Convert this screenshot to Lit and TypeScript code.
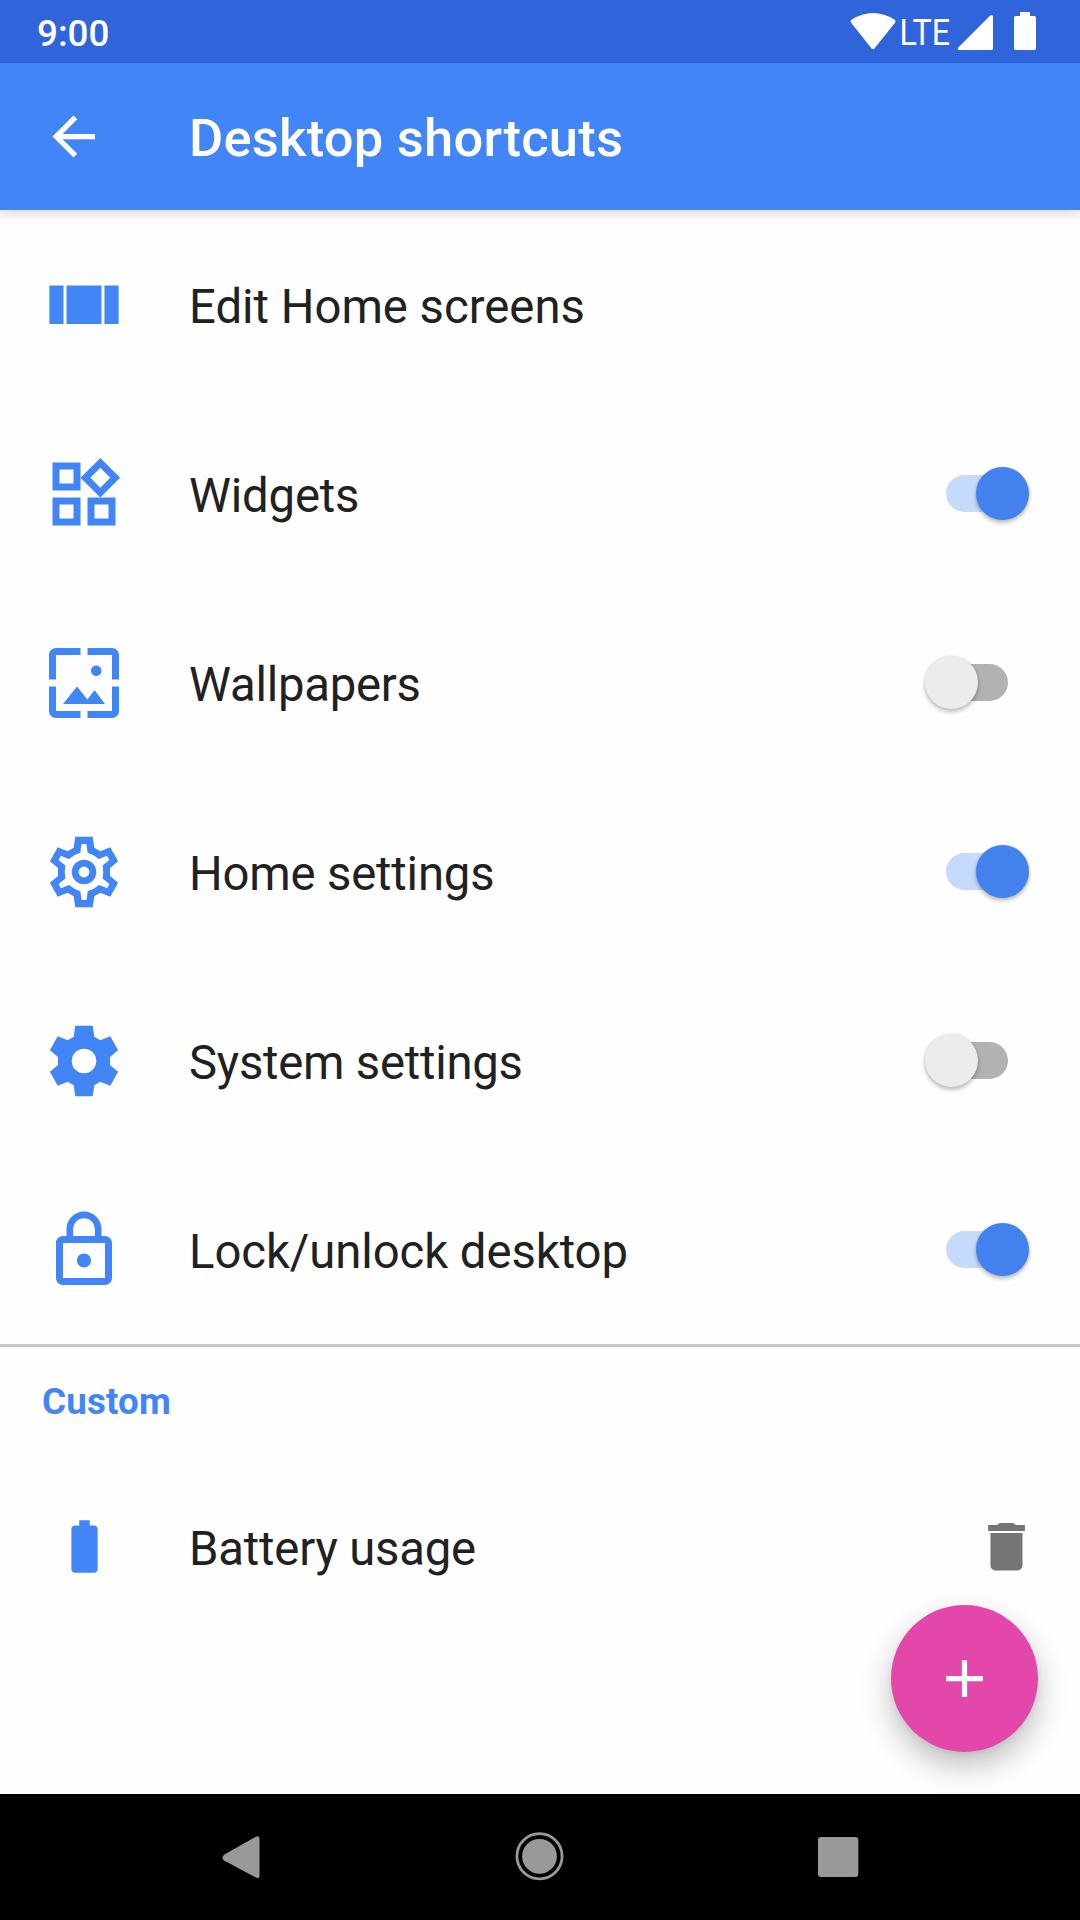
import { LitElement, html, css, svg, nothing } from "lit";
import { customElement, property, state } from "lit/decorators.js";
import { classMap } from "lit/directives/class-map.js";
import { styleMap } from "lit/directives/style-map.js";

// Outer silhouette shared by the outlined and the filled gear.
const GEAR =
  "M14.5 1.95L14.95 5.05L16.65 6.05L19.5 4.9L21.75 8.95L19.43 10.85V13.15L21.75 15.05L19.5 19.1L16.65 17.95L14.95 18.95L14.5 22.05H9.5L9.05 18.95L7.35 17.95L4.5 19.1L2.25 15.05L4.57 13.15V10.85L2.25 8.95L4.5 4.9L7.35 6.05L9.05 5.05L9.5 1.95Z";

const ICONS: Record<string, unknown> = {
  back: svg`<path d="M20.2 11H7.83l5.59-5.59L12 4l-8 8 8 8 1.41-1.41L7.83 13H20.2z"/>`,
  screens: svg`<path d="M2.1 6.4h4.05v11.05H2.1zM7 6.4h10v11.05H7zM17.85 6.4h4.05v11.05h-4.05z"/>`,
  widgets: svg`<path d="M16.66 4.52l2.83 2.83-2.83 2.83-2.83-2.83 2.83-2.83M9 5v4H5V5h4m10 10v4h-4v-4h4M9 15v4H5v-4h4m7.66-13.31L11 7.34 16.66 13l5.66-5.66-5.66-5.65zM11 3H3v8h8V3zm10 10h-8v8h8v-8zm-10 0H3v8h8v-8z"/>`,
  wallpapers: svg`<path d="M4 4h7V2H4c-1.1 0-2 .9-2 2v7h2V4zm6 9l-4 5h12l-3-4-2.03 2.71L10 13zm7-4.5c0-.83-.67-1.5-1.5-1.5S14 7.67 14 8.5s.67 1.5 1.5 1.5S17 9.33 17 8.5zM20 2h-7v2h7v7h2V4c0-1.1-.9-2-2-2zm0 18h-7v2h7c1.1 0 2-.9 2-2v-7h-2v7zM4 13H2v7c0 1.1.9 2 2 2h7v-2H4v-7z"/>`,
  gearOutline: svg`<path fill-rule="evenodd" d="${GEAR}M17.45 11.27c.04.31.05.52.05.73 0 .21-.02.43-.05.73l-.14 1.13.89.7 1.08.84-.7 1.21-1.27-.51-1.04-.42-.9.68c-.43.32-.84.56-1.25.73l-1.06.43-.16 1.13-.2 1.35h-1.4l-.19-1.35-.16-1.13-1.06-.43c-.43-.18-.83-.41-1.23-.71l-.91-.7-1.06.43-1.27.51-.7-1.21 1.08-.84.89-.7-.14-1.13c-.03-.31-.05-.54-.05-.74s.02-.43.05-.73l.14-1.13-.89-.7-1.08-.84.7-1.21 1.27.51 1.04.42.9-.68c.43-.32.84-.56 1.25-.73l1.06-.43.16-1.13.2-1.35h1.39l.19 1.35.16 1.13 1.06.43c.43.18.83.41 1.23.71l.91.7 1.06-.43 1.27-.51.7 1.21-1.07.85-.89.7.14 1.13z"/><circle cx="12" cy="12" r="2.53" fill="none" stroke="currentColor" stroke-width="1.95"/>`,
  gear: svg`<path fill-rule="evenodd" d="${GEAR}M12 8.5a3.5 3.5 0 1 0 0 7a3.5 3.5 0 1 0 0-7z"/>`,
  lock: svg`<path d="M18 8h-1V6c0-2.76-2.24-5-5-5S7 3.24 7 6v2H6c-1.1 0-2 .9-2 2v10c0 1.1.9 2 2 2h12c1.1 0 2-.9 2-2V10c0-1.1-.9-2-2-2zM8.9 6c0-1.71 1.39-3.1 3.1-3.1s3.1 1.39 3.1 3.1v2H8.9V6zM18 20H6V10h12v10zm-6-3c1.1 0 2-.9 2-2s-.9-2-2-2-2 .9-2 2 .9 2 2 2z"/>`,
  battery: svg`<path d="M15.67 4H14V2h-4v2H8.33C7.6 4 7 4.6 7 5.33v15.33C7 21.4 7.6 22 8.33 22h7.33c.74 0 1.34-.6 1.34-1.33V5.33C17 4.6 16.4 4 15.67 4z"/>`,
  trash: svg`<path d="M5.9 6.9h12.2V19.1c0 1.1-.9 2-2 2H7.9c-1.1 0-2-.9-2-2zM5 3.8h3.5l.5-.5q.3-.3.8-.3h4.4q.5 0 .8.3l.5.5H19v2.25H5z"/>`,
  add: svg`<path d="M19 13h-6v6h-2v-6H5v-2h6V5h2v6h6z"/>`,
};

@customElement("ui-icon")
class UiIcon extends LitElement {
  static styles = css`
    :host { display: block; flex: none; }
    .glyph { display: block; width: 100%; height: 100%; fill: currentColor; }
  `;
  @property() name = "";
  render() {
    return html`<svg class="glyph" viewBox="0 0 24 24">${ICONS[this.name]}</svg>`;
  }
}

@customElement("ui-switch")
class UiSwitch extends LitElement {
  static styles = css`
    :host { display: block; flex: none; }
    .switch { display: grid; align-items: center; width: 104px; height: 53px; cursor: pointer; }
    .track, .thumb { grid-area: 1 / 1; }
    .track { justify-self: center; width: 62px; height: 37px; border-radius: 19px; background: #b2b2b2; }
    .thumb {
      justify-self: start; width: 53px; height: 53px; border-radius: 50%; background: #ececec;
      box-shadow: 0 3px 4px rgba(0, 0, 0, 0.24), 0 0 3px rgba(0, 0, 0, 0.12);
    }
    .on .track { background: #c6dafc; }
    .on .thumb { justify-self: end; background: #4382ee; }
  `;
  @property({ type: Boolean }) on = false;
  render() {
    return html`<div
      class=${classMap({ switch: true, on: this.on })}
      role="switch"
      aria-checked=${this.on ? "true" : "false"}
      @click=${() => (this.on = !this.on)}
    ><div class="track"></div><div class="thumb"></div></div>`;
  }
}

interface Shortcut {
  icon: string;
  label: string;
  tracking: number;
  on?: boolean;
}

@customElement("app-root")
class AppRoot extends LitElement {
  static styles = css`
    :host {
      display: flex; flex-direction: column; position: relative;
      width: 1080px; height: 1920px; overflow: hidden;
      background: #fefefe; color: #212121;
      font-family: Roboto, "Noto Sans", sans-serif;
    }
    .status {
      box-sizing: border-box; flex: none; display: flex; justify-content: space-between;
      height: 63px; padding-left: 37px; background: #2f64db; color: #fff;
    }
    .clock { font-size: 36.75px; font-weight: 500; line-height: 68px; }
    .indicators { display: block; width: 240px; height: 63px; fill: #fff; }
    .lte { font-family: Roboto, sans-serif; font-size: 37.5px; font-weight: 400; }
    .appbar {
      box-sizing: border-box; flex: none; display: flex; align-items: center; gap: 84px;
      height: 147px; padding: 0 42px; background: #4285f6; color: #fff;
      box-shadow: 0 4px 11px rgba(0, 0, 0, 0.15);
      clip-path: inset(0 0 -24px 0);
    }
    .small { width: 63px; height: 63px; }
    .title { font-size: 52.5px; font-weight: 500; line-height: 62px; padding-top: 3px; letter-spacing: 0.22px; }
    .list { flex: 1; display: flex; flex-direction: column; }
    .row { box-sizing: border-box; flex: none; display: flex; align-items: center; height: 189px; padding: 0 42px; }
    .lead { display: flex; justify-content: center; width: 84px; margin-right: 63px; color: #4285f6; }
    .large { width: 84px; height: 84px; }
    .label { flex: 1; font-size: 47.25px; line-height: 56px; padding-top: 5px; }
    .toggle { margin-right: 9px; }
    .trash { color: #757575; }
    .divider { flex: none; height: 3px; background: #cacaca; }
    .section {
      box-sizing: border-box; flex: none; height: 105px; padding: 0 42px;
      font-size: 36.75px; font-weight: 700; line-height: 109px; color: #4285f6; letter-spacing: 0.15px;
    }
    .fab {
      position: absolute; right: 42px; bottom: 168px; width: 147px; height: 147px;
      display: flex; align-items: center; justify-content: center;
      border-radius: 50%; background: #e347aa; color: #fff;
      box-shadow: 0 14px 30px rgba(0, 0, 0, 0.25), 0 2px 6px rgba(0, 0, 0, 0.06);
    }
    .nav { position: relative; flex: none; height: 126px; background: #000; }
    .navicons { display: block; width: 1080px; height: 126px; fill: #999; }
  `;

  @state() private shortcuts: Shortcut[] = [
    { icon: "screens", label: "Edit Home screens", tracking: 0 },
    { icon: "widgets", label: "Widgets", tracking: -0.17, on: true },
    { icon: "wallpapers", label: "Wallpapers", tracking: -0.24, on: false },
    { icon: "gearOutline", label: "Home settings", tracking: -0.18, on: true },
    { icon: "gear", label: "System settings", tracking: -0.24, on: false },
    { icon: "lock", label: "Lock/unlock desktop", tracking: -0.06, on: true },
  ];

  private label(text: string, tracking: number) {
    return html`<div class="label" style=${styleMap({ letterSpacing: `${tracking}px` })}>${text}</div>`;
  }

  private row(s: Shortcut) {
    return html`<div class="row">
      <div class="lead"><ui-icon class="large" name=${s.icon}></ui-icon></div>
      ${this.label(s.label, s.tracking)}
      ${s.on === undefined ? nothing : html`<ui-switch class="toggle" ?on=${s.on}></ui-switch>`}
    </div>`;
  }

  render() {
    return html`
      <div class="status">
        <div class="clock">9:00</div>
        <svg class="indicators" viewBox="840 0 240 63">
          <path d="M851.3 19.8Q873 6.3 894.8 19.8Q896 20.8 895.2 22.4L874.6 48.2Q873 50 871.4 48.2L850.9 22.4Q850 20.8 851.3 19.8Z"/>
          <text class="lte" x="899.5" y="44.7" textLength="50.5" lengthAdjust="spacingAndGlyphs">LTE</text>
          <path d="M990 15.7Q993 13.6 993 17V48.5Q993 50 991.5 50H959.5Q956.6 50 958.6 47.2Z"/>
          <path d="M1020 12h10v4h4.2q1.8 0 1.8 1.8v30.4q0 1.8-1.8 1.8h-18.4q-1.8 0-1.8-1.8v-30.4q0-1.8 1.8-1.8h4.2z"/>
        </svg>
      </div>
      <div class="appbar">
        <ui-icon class="small" name="back"></ui-icon>
        <div class="title">Desktop shortcuts</div>
      </div>
      <div class="list">
        ${this.shortcuts.map((s) => this.row(s))}
        <div class="divider"></div>
        <div class="section">Custom</div>
        <div class="row">
          <div class="lead"><ui-icon class="small" name="battery"></ui-icon></div>
          ${this.label("Battery usage", -0.18)}
          <ui-icon class="small trash" name="trash"></ui-icon>
        </div>
      </div>
      <div class="fab"><ui-icon class="small" name="add"></ui-icon></div>
      <div class="nav">
        <svg class="navicons" viewBox="0 0 1080 126">
          <path d="M224 60.8L255.8 42.8Q259.5 41.2 259.5 45V81.4Q259.5 85.2 255.8 83.6L224 66.6Q221 63.7 224 60.8Z"/>
          <circle cx="539.5" cy="62.3" r="17.4"/>
          <circle cx="539.5" cy="62.3" r="22.6" fill="none" stroke="#999" stroke-width="2.8"/>
          <rect x="818" y="43" width="40.3" height="40" rx="3"/>
        </svg>
      </div>
    `;
  }
}
